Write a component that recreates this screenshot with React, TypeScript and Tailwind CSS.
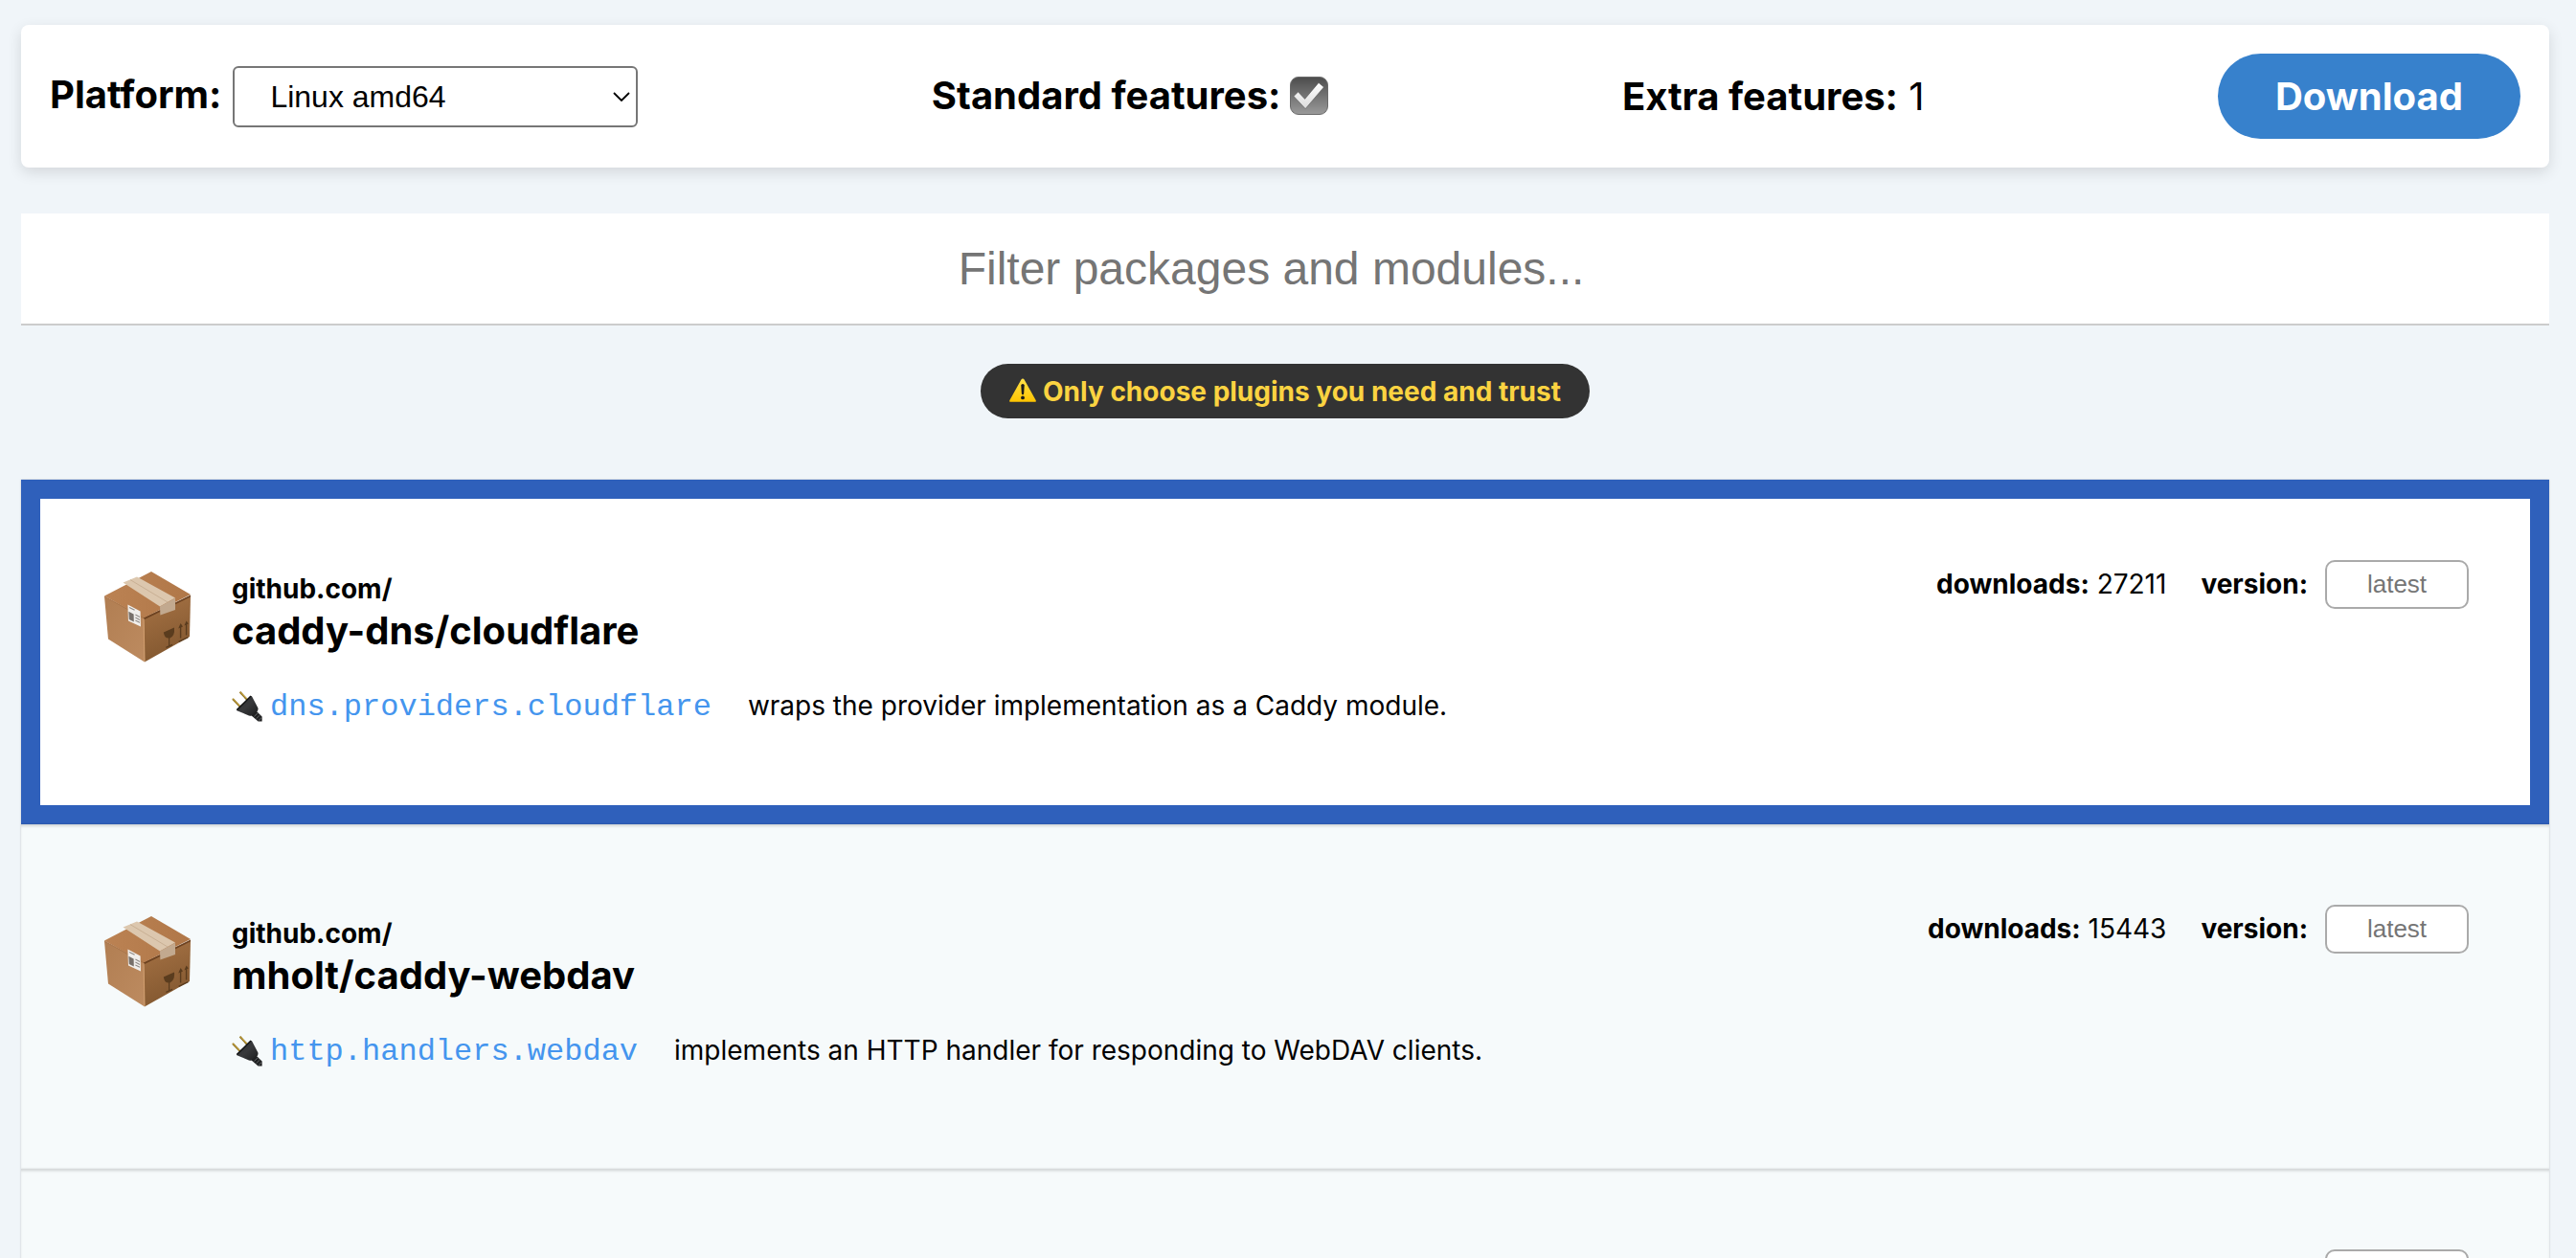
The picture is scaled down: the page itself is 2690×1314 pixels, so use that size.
import React from "react";

type Pkg = {
  host: string;
  name: string;
  module: string;
  description: string;
  downloads: string;
  selected?: boolean;
};

const packages: Pkg[] = [
  {
    host: "github.com/",
    name: "caddy-dns/cloudflare",
    module: "dns.providers.cloudflare",
    description: "wraps the provider implementation as a Caddy module.",
    downloads: "27211",
    selected: true,
  },
  {
    host: "github.com/",
    name: "mholt/caddy-webdav",
    module: "http.handlers.webdav",
    description: "implements an HTTP handler for responding to WebDAV clients.",
    downloads: "15443",
  },
];

function CheckIcon() {
  return (
    <svg viewBox="0 0 40 40" className="size-10 shrink-0" role="img" aria-label="Included">
      <defs>
        <linearGradient id="check-bg" x1="0" y1="0" x2="0" y2="1">
          <stop offset="0" stopColor="#4c4c4c" />
          <stop offset="1" stopColor="#9a9a9a" />
        </linearGradient>
        <linearGradient id="check-fg" x1="0" y1="0" x2="0" y2="1">
          <stop offset="0" stopColor="#ffffff" />
          <stop offset="1" stopColor="#dcdcdc" />
        </linearGradient>
      </defs>
      <rect x="0.5" y="0.5" width="39" height="39" rx="8.5" fill="url(#check-bg)" stroke="#6a6a6a" />
      <path
        d="M4 20.5 L8.6 16 L15.6 23.4 L30 6.4 L35.4 11 L16.2 33.6 Z"
        fill="url(#check-fg)"
        stroke="#4a4a4a"
        strokeOpacity="0.6"
        strokeWidth="0.8"
      />
    </svg>
  );
}

function WarningIcon() {
  return (
    <svg viewBox="0 0 28 30" className="h-[30px] w-7 shrink-0" aria-hidden="true">
      <defs>
        <linearGradient id="warn" x1="0" y1="0" x2="0" y2="1">
          <stop offset="0" stopColor="#ffe14a" />
          <stop offset="1" stopColor="#ffc400" />
        </linearGradient>
      </defs>
      <path d="M14 1.4 Q15 1.4 15.6 2.6 L27.6 24 Q28.4 25.8 26.6 25.8 L1.4 25.8 Q-0.4 25.8 0.4 24 L12.4 2.6 Q13 1.4 14 1.4 Z" fill="url(#warn)" />
      <path d="M12.3 8.6 Q12.3 7 14 7 Q15.7 7 15.7 8.6 L15.2 17 Q15 18.2 14 18.2 Q13 18.2 12.8 17 Z" fill="#1b1b1b" />
      <circle cx="14" cy="21.4" r="1.9" fill="#1b1b1b" />
    </svg>
  );
}

function BoxIcon() {
  return (
    <svg viewBox="0 0 96 96" className="size-24 shrink-0" aria-hidden="true">
      <defs>
        <linearGradient id="box-left" x1="0" y1="0" x2="1" y2="1">
          <stop offset="0" stopColor="#b17e52" />
          <stop offset="1" stopColor="#bd8b60" />
        </linearGradient>
        <linearGradient id="box-right" x1="0" y1="0" x2="0.3" y2="1">
          <stop offset="0" stopColor="#a77345" />
          <stop offset="1" stopColor="#835830" />
        </linearGradient>
        <linearGradient id="box-top" x1="0" y1="0" x2="1" y2="0">
          <stop offset="0" stopColor="#bb8253" />
          <stop offset="1" stopColor="#b07748" />
        </linearGradient>
      </defs>
      <path d="M3 27 L44 49 L45 95.6 L7 71.5 Z" fill="url(#box-left)" />
      <path d="M44 49 L93 27 L92 69 L45 95.6 Z" fill="url(#box-right)" />
      <path d="M3 26.4 L52 1 L93 25 L44 49.4 Z" fill="url(#box-top)" />
      <path d="M3 26.4 L44 49 L44 50.2 L3 27.6 Z" fill="#a87347" />
      <path d="M44 49.4 L93 25.4 L93 27.4 L44 51.4 Z" fill="#6d4220" />
      <path d="M44 50 L45 95" stroke="#d09c6c" strokeWidth="1.1" />
      <path d="M22.5 12.6 L37 6.4 L77 28.6 L61 37.6 Z" fill="#dcc7ae" />
      <path d="M61 37.4 L77 28.8 L77 41 L61.4 46.4 Z" fill="#c2a98f" />
      <path d="M30 9.6 L69 33" stroke="#c9b094" strokeWidth="1" />
      <path d="M27.4 35.4 L40.6 42.4 L41 58.6 L28 52.4 Z" fill="#f1efec" />
      <path d="M28.4 42.8 L33.6 45.4 L33.8 53.4 L28.8 51 Z" fill="#77706a" />
      <path d="M29 38.6 L34.6 41.2 M35.4 46 L40 48.4 M35.4 49 L40 51.4 M35.4 52 L40 54.2" stroke="#8f8a86" strokeWidth="1.1" />
      <path d="M64.8 64.4 L76 59.4 Q76.8 68.4 71.4 70.4 Q66 71.6 64.8 64.4 Z" fill="#5a3c1e" />
      <path d="M70.6 70 L70.6 78.6 M67.4 80.4 L74 77.4" stroke="#5a3c1e" strokeWidth="1.2" fill="none" />
      <path d="M82.6 58 L82.6 70.4 M88.6 55.4 L88.6 67.6 M80.6 74.4 L90.4 69.6" stroke="#5a3c1e" strokeWidth="1.4" />
      <path d="M80.2 60.4 L82.6 55 L85 58.4 Z M86.4 57.6 L88.6 52.4 L90.8 55.4 Z" fill="#5a3c1e" />
    </svg>
  );
}

function PlugIcon() {
  return (
    <svg viewBox="0 0 32 32" className="size-8 shrink-0" aria-hidden="true">
      <defs>
        <linearGradient id="plug" x1="0" y1="0" x2="1" y2="1">
          <stop offset="0" stopColor="#2c2e30" />
          <stop offset="0.5" stopColor="#38393b" />
          <stop offset="1" stopColor="#1c1d1e" />
        </linearGradient>
      </defs>
      <path d="M1 8 L9 16.4" stroke="#8a6d1c" strokeWidth="2" />
      <path d="M1 7.6 L8.6 15.6" stroke="#e0b94a" strokeWidth="0.8" />
      <path d="M8.6 0.8 L16 8.8" stroke="#8a6d1c" strokeWidth="2" />
      <path d="M8.8 0.6 L16 8.2" stroke="#e0b94a" strokeWidth="0.8" />
      <path d="M19.6 5 Q21 4.6 21.4 6 L27.4 17.4 Q28 20 26 21.8 L22.4 25 Q20.4 26.4 18 25.4 L6 20.6 Q4.6 20 5.6 18.6 Z" fill="url(#plug)" />
      <path d="M20 5 L5.4 19.6" stroke="#111213" strokeWidth="1.4" />
      <path d="M25.4 20.4 L31.6 26.4 L31.6 31.4 L27.6 31.4 L20.6 25.4 Z" fill="#202122" />
      <path d="M27.4 22.6 L23.4 26.4 M29.4 25 L25.6 28.6 M31.4 27.4 L28 30.6" stroke="#6a6c6e" strokeWidth="0.9" />
    </svg>
  );
}

function VersionField({ id }: { id: string }) {
  return (
    <div className="flex items-center gap-[18px]">
      <label htmlFor={id} className="font-bold">
        version:
      </label>
      <input
        id={id}
        type="text"
        placeholder="latest"
        className="h-[51px] w-[150px] rounded-[10px] border-2 border-[#aaaaaa] bg-white text-center font-['Liberation_Sans',Arial,sans-serif] text-[26px] placeholder:text-[#757575]"
      />
    </div>
  );
}

function PackageCard({ pkg }: { pkg: Pkg }) {
  return (
    <article
      className={
        pkg.selected
          ? "flex gap-10 border-20 border-[#2f60bb] bg-white px-16 pt-16 pb-[82px] shadow-[0_0_2px_rgba(0,0,0,0.2)]"
          : "flex gap-10 bg-[#f6fafb] px-[84px] pt-[84px] pb-[102px] shadow-[0_0_2px_rgba(0,0,0,0.2),inset_0_3px_3px_-1px_rgba(0,0,0,0.15)]"
      }
    >
      <div className="pt-[11px]">
        <BoxIcon />
      </div>
      <div className="flex grow flex-col">
        <div className="flex justify-between">
          <h2 className="pt-3 font-bold">
            <span className="block text-[28px] leading-9">{pkg.host}</span>
            <span className="block text-[40px] leading-[52px]">{pkg.name}</span>
          </h2>
          <div className="flex items-center gap-9 self-start text-[28px] leading-[51px]">
            <p>
              <b>downloads:</b> {pkg.downloads}
            </p>
            <VersionField id={`version-${pkg.name}`} />
          </div>
        </div>
        <div className="flex items-center gap-2 pt-8 leading-10">
          <PlugIcon />
          <div className="flex items-baseline gap-[38px]">
            <a href="#" className="font-['Liberation_Mono','Courier_New',monospace] text-[32px] text-[#4495ee]">
              {pkg.module}
            </a>
            <p className="text-[28px]">{pkg.description}</p>
          </div>
        </div>
      </div>
    </article>
  );
}

export default function App() {
  return (
    <div className="h-screen overflow-hidden bg-[#f0f5f9] pt-[26px] pr-7 pl-[22px] font-[Inter,sans-serif] text-black">
      <header className="flex items-center justify-between rounded-lg bg-white p-[30px] text-[40px] leading-[49px] shadow-[0_5px_15px_rgba(0,0,0,0.12)]">
        <div className="flex items-center gap-3">
          <label htmlFor="platform" className="pb-1 font-bold">
            Platform:
          </label>
          <div className="relative">
            <select
              id="platform"
              className="block h-16 w-[423px] appearance-none rounded-md border-2 border-[#767676] bg-white pl-[37px] font-['Liberation_Sans',Arial,sans-serif] text-[32px] leading-10"
            >
              <option>Linux amd64</option>
            </select>
            <svg viewBox="0 0 18 10" className="pointer-events-none absolute top-[27px] right-2 h-2.5 w-[18px]" aria-hidden="true">
              <path d="M1 1 L9 9 L17 1" fill="none" stroke="#000" strokeWidth="1.8" />
            </svg>
          </div>
        </div>
        <div className="flex items-center gap-2.5 pb-0.5">
          <b>Standard features:</b>
          <CheckIcon />
        </div>
        <p>
          <b>Extra features:</b> 1
        </p>
        <button type="button" className="h-[89px] rounded-full bg-[#3781cc] px-[60px] font-bold text-white">
          Download
        </button>
      </header>

      <input
        type="search"
        aria-label="Filter packages and modules"
        placeholder="Filter packages and modules..."
        className="mt-12 block h-[117px] w-full appearance-none border-b-2 border-[#cccccc] bg-white pr-1 text-center font-['Liberation_Sans',Arial,sans-serif] text-5xl placeholder:text-[#757575]"
      />

      <div className="mt-10 flex justify-center">
        <p className="flex h-[57px] items-center gap-[7px] rounded-full bg-[#333333] px-[30px] text-[28px] font-bold text-[#fbd341]">
          <WarningIcon />
          Only choose plugins you need and trust
        </p>
      </div>

      <main className="mt-16">
        {packages.map((pkg) => (
          <PackageCard key={pkg.name} pkg={pkg} />
        ))}
        <article className="flex h-[360px] items-start justify-end bg-[#f6fafb] px-[84px] pt-[84px] shadow-[0_0_2px_rgba(0,0,0,0.2),inset_0_3px_3px_-1px_rgba(0,0,0,0.15)]">
          <input
            type="text"
            aria-label="version"
            className="h-[51px] w-[150px] rounded-[10px] border-2 border-[#aaaaaa] bg-white text-center font-['Liberation_Sans',Arial,sans-serif] text-[26px]"
          />
        </article>
      </main>
    </div>
  );
}
